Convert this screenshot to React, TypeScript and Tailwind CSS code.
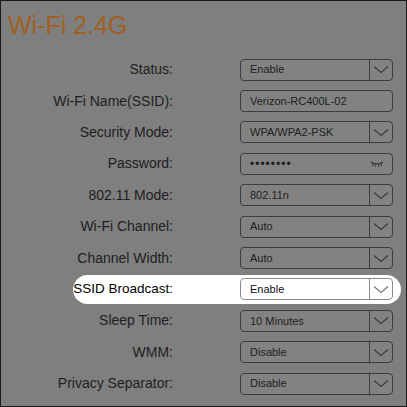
import React from "react";

type Row = { label: string; value: string; kind: "select" | "text" | "password"; hi?: boolean };

const rows: Row[] = [
  { label: "Status:", value: "Enable", kind: "select" },
  { label: "Wi-Fi Name(SSID):", value: "Verizon-RC400L-02", kind: "text" },
  { label: "Security Mode:", value: "WPA/WPA2-PSK", kind: "select" },
  { label: "Password:", value: "••••••••", kind: "password" },
  { label: "802.11 Mode:", value: "802.11n", kind: "select" },
  { label: "Wi-Fi Channel:", value: "Auto", kind: "select" },
  { label: "Channel Width:", value: "Auto", kind: "select" },
  { label: "SSID Broadcast:", value: "Enable", kind: "select", hi: true },
  { label: "Sleep Time:", value: "10 Minutes", kind: "select" },
  { label: "WMM:", value: "Disable", kind: "select" },
  { label: "Privacy Separator:", value: "Disable", kind: "select" },
];

function Chevron({ color }: { color: string }) {
  return (
    <svg width="16" height="9" viewBox="0 0 16 9" fill="none">
      <path d="M1 1.5 L8 7.5 L15 1.5" stroke={color} strokeWidth="1.2" />
    </svg>
  );
}

function EyeClosed() {
  return (
    <svg width="14" height="6" viewBox="0 0 14 6" fill="none">
      <path d="M1 1 Q7 5 13 1" stroke="#2a2a2a" strokeWidth="1.1" />
      <path d="M3 2.6 L2.5 5 M5.5 3.5 L5.3 5.5 M8.5 3.5 L8.7 5.5 M11 2.6 L11.5 5" stroke="#2a2a2a" strokeWidth="1" />
    </svg>
  );
}

export default function App() {
  return (
    <div
      className="w-[407px] h-[407px] bg-[#7f7f7f] border border-[#1a1a1a] overflow-hidden relative"
      style={{ fontFamily: '"Liberation Sans", Arial, sans-serif' }}
    >
      <div className="pl-[7px] pt-[9px] h-[53px] text-[25px] leading-[30px] text-[#a0601f]">Wi-Fi 2.4G</div>
      <div className="flex flex-col">
        {rows.map((r) => {
          const border = r.hi ? "border-[#8a8a8a]" : "border-[#3c3c3c]";
          const txt = r.hi ? "text-[#111]" : "text-[#1e1e1e]";
          return (
            <div key={r.label} className="relative h-[31.4px] flex items-center">
              {r.hi && <div className="absolute left-[72px] w-[328px] top-[1px] h-[29px] rounded-full bg-white" />}
              <div className={`relative w-[172px] shrink-0 text-right ${r.hi ? "text-[13.5px] text-black" : `text-[14px] ${txt}`}`}>
                {r.label}
              </div>
              <div
                className={`relative ml-[67px] w-[153px] h-[22px] rounded-[4px] border ${border} flex items-center ${
                  r.hi ? "bg-white" : "bg-[#828282]"
                }`}
              >
                <div className={`flex-1 pl-[9px] text-[11px] ${txt} ${r.kind === "password" ? "tracking-[1px] text-[12px]" : ""}`}>
                  {r.value}
                </div>
                {r.kind === "select" && (
                  <div className={`w-[23px] h-full border-l ${border} flex items-center justify-center`}>
                    <Chevron color={r.hi ? "#777" : "#3a3a3a"} />
                  </div>
                )}
                {r.kind === "password" && (
                  <div className="pr-[8px] flex items-center">
                    <EyeClosed />
                  </div>
                )}
              </div>
            </div>
          );
        })}
      </div>
    </div>
  );
}
